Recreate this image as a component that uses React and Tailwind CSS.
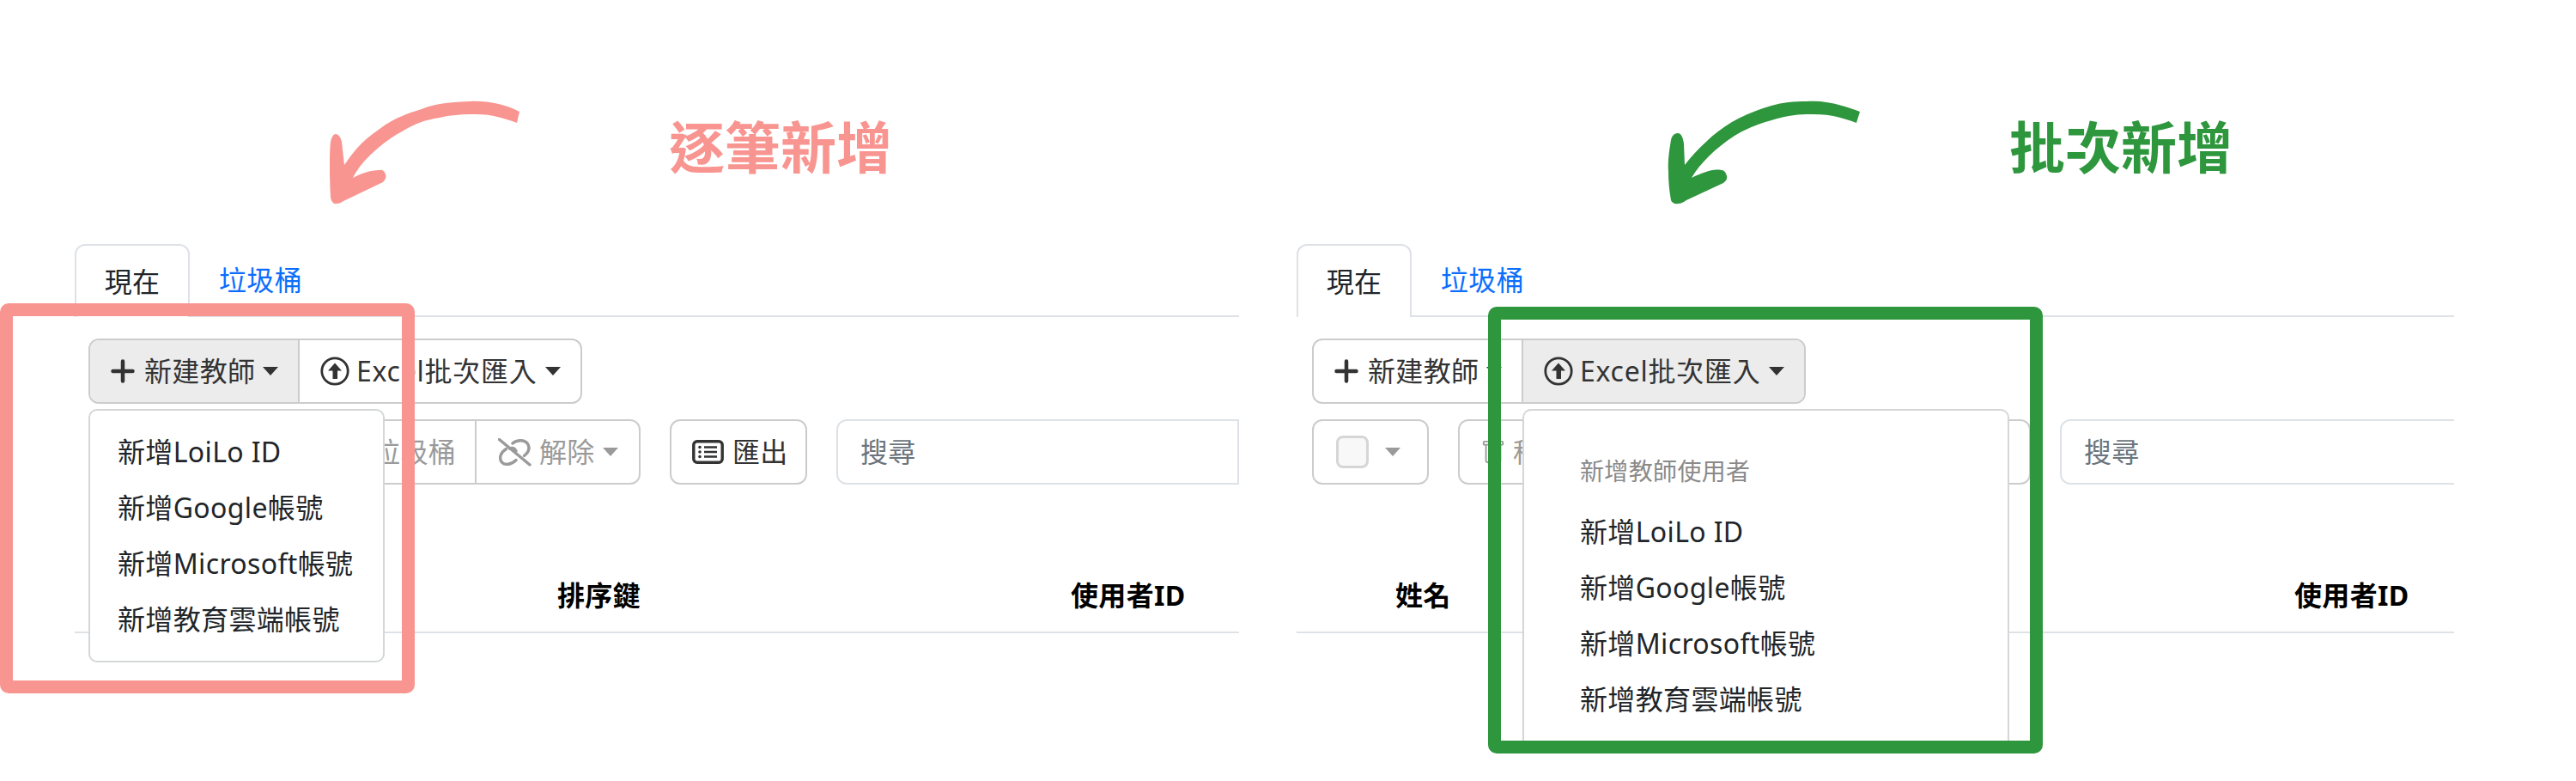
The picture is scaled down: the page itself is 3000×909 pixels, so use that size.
import { BsTrash } from 'react-icons/bs'

const ITEMS = ['新增LoiLo ID', '新增Google帳號', '新增Microsoft帳號', '新增教育雲端帳號']

function Caret({ muted }) {
  return (
    <span
      className={`inline-block w-0 h-0 border-x-[9px] border-x-transparent border-t-[10px] ${
        muted ? 'border-t-[#9a9a9a]' : 'border-t-[#333333]'
      }`}
    />
  )
}

function PlusIcon() {
  return (
    <svg width="28" height="28" viewBox="0 0 28 28" className="shrink-0">
      <path d="M14 2.5v23M2.5 14h23" stroke="#333333" strokeWidth="4.5" strokeLinecap="round" fill="none" />
    </svg>
  )
}

function UploadIcon() {
  return (
    <svg width="34" height="34" viewBox="0 0 34 34" className="shrink-0">
      <circle cx="17" cy="17" r="15.2" stroke="#333333" strokeWidth="2.8" fill="none" />
      <path d="M17 7.5 L25 16.5 H20 V26 H14.5 V16.5 H9 Z" fill="#333333" />
    </svg>
  )
}

function UnlinkIcon() {
  return (
    <svg width="39" height="33" viewBox="0 0 39 33" className="shrink-0">
      <g stroke="#9a9a9a" strokeWidth="3.4" strokeLinecap="round" fill="none">
        <path d="M1.5 1.5 L37 31" />
        <path d="M17 6 C22 1.5 31 1.5 34.5 6.5 C37.5 11.5 35.5 16.5 30.5 20.5" />
        <path d="M9.5 12.5 C3 16.5 1 23 4 27.5 C7.5 32 15.5 31 21 25.5" />
        <path d="M13.5 12 C16.5 11 19.5 12 21 15" />
      </g>
    </svg>
  )
}

function ListIcon() {
  return (
    <svg width="37" height="28" viewBox="0 0 37 28" className="shrink-0">
      <rect x="1.8" y="1.8" width="33.4" height="24.4" rx="4" stroke="#333333" strokeWidth="3.4" fill="none" />
      <path d="M14 8.5h15M14 14h15M14 19.5h15" stroke="#333333" strokeWidth="2.4" fill="none" />
      <circle cx="9" cy="8.5" r="1.8" fill="#333333" />
      <circle cx="9" cy="14" r="1.8" fill="#333333" />
      <circle cx="9" cy="19.5" r="1.8" fill="#333333" />
    </svg>
  )
}

const PINK_ARROW =
  'M221 13 C203 4 183 0 163 1 C142 2 123 3 107 10 C90 15 78 20 65 28 C54 36 45 42 37 50 C29 58 23 66 17 75 L14 48 C13 43 10 39 7 39 C4 39 2 43 1 48 C-0.5 60 -0.3 90 1 113 C2 118 5 121 8 120 C11 120 13 119 16 117 L62 95 C65 92 66 89 65 86 C64 82 61 80 58 81 C47 81 36 85 27 90 C33 78 42 68 51 60 C62 50 74 41 86 35 C99 27 113 22 128 20 C140 17 152 16 163 16 C173 16 182 16 191 18 C201 20 210 23 218 26 Z'

const GREEN_ARROW =
  'M224 13 C217 10 210 8 203 6 C190 2 176 0 162 1 C148 1 134 2 121 6 C104 11 89 17 75 25 C64 32 54 39 45 48 C35 57 27 66 20 75 L19 50 C18 43 16 38 12 38 C8 38 5 41 4 46 C2 58 0 71 1 83 C1 94 2 105 4 116 C5 119 9 121 12 120 C16 120 19 118 22 116 L65 96 C68 94 70 91 69 88 C68 84 66 81 63 81 C56 80 50 81 45 83 C39 85 33 87 28 90 C33 81 40 73 47 66 C57 56 67 48 78 41 C91 33 106 27 121 23 C134 19 148 16 162 16 C172 16 183 16 193 18 C203 20 212 23 220 26 Z'

function Dropdown({ heading }) {
  if (heading) {
    return (
      <div className="absolute left-0 top-[80px] w-[567px] h-[401px] bg-white border-x-2 border-t-2 border-[#d4d6d8] rounded-t-[10px] pt-[37px]">
        <div className="h-[65px] mb-[6px] px-[65px] flex items-center text-[#8a8a8a] text-[28px]">{heading}</div>
        {ITEMS.map((t) => (
          <div key={t} className="h-[65px] px-[65px] flex items-center text-[#212529]">{t}</div>
        ))}
      </div>
    )
  }
  return (
    <div className="absolute -left-[2px] top-[80px] w-[345px] bg-white border-2 border-[#d4d6d8] rounded-[10px] pt-[15px] pb-[16px]">
      {ITEMS.map((t) => (
        <div key={t} className="h-[65px] px-[32px] flex items-center text-[#212529]">{t}</div>
      ))}
    </div>
  )
}

function Panel({ active, title, titleColor, arrow, arrowFill, panelWidth, titleGap, arrowLeft, insetClass, headClass }) {
  return (
    <section className={panelWidth}>
      {/* annotation above the tabs */}
      <div className="h-[284px] flex items-start">
        <svg width="226" height="124" viewBox="0 0 226 124" className={`mt-[117px] shrink-0 ${arrowLeft}`}>
          <path d={arrow} fill={arrowFill} />
        </svg>
        <h2 className={`mt-[138px] text-[65px] leading-[66px] font-bold tracking-normal whitespace-nowrap ${titleColor} ${titleGap}`}>
          {title}
        </h2>
      </div>

      <div className="flex h-[85px] border-b-2 border-[#dee2e6]">
        <div className="w-[134px] h-[85px] bg-white border-2 border-b-0 border-[#dee2e6] rounded-t-[12px] flex items-center justify-center text-[#212529]">
          現在
        </div>
        <div className="px-[34px] flex items-center text-[#0d6efd]">垃圾桶</div>
      </div>

      <div className={insetClass}>
        <div className="relative mt-[25px] h-[76px] w-[575px] flex border-2 border-[#cccccc] rounded-[12px] text-[#333333]">
          <div className={`w-[244px] flex items-center pl-[24px] rounded-l-[10px] border-r-2 border-[#cccccc] ${active === 'single' ? 'bg-[#ececec]' : ''}`}>
            <PlusIcon />
            <span className="ml-[11px] mr-[9px]">新建教師</span>
            <Caret />
          </div>
          <div className={`flex-1 flex items-center pl-[24px] rounded-r-[10px] ${active === 'batch' ? 'bg-[#ececec]' : ''}`}>
            <UploadIcon />
            <span className="ml-[8px] mr-[9px] tracking-[0.75px]">Excel批次匯入</span>
            <Caret />
          </div>
          {active === 'single' ? (
            <Dropdown />
          ) : (
            <div className="absolute left-[243px] top-0">
              <Dropdown heading="新增教師使用者" />
            </div>
          )}
        </div>

        <div className="mt-[18px] h-[76px] flex gap-[34px] overflow-hidden">
          <div className="w-[136px] shrink-0 flex items-center pl-[26px] border-2 border-[#cccccc] rounded-[12px]">
            <span className="w-[38px] h-[38px] bg-[#f8f8f8] border-[3px] border-[#d6d6d6] rounded-[8px] mr-[19px]" />
            <Caret muted />
          </div>
          <div className="shrink-0 flex border-2 border-[#cccccc] rounded-[12px] text-[#9a9a9a]">
            <div className="w-[280px] flex items-center pl-[24px] border-r-2 border-[#cccccc]">
              <BsTrash size={30} color="#9a9a9a" className="shrink-0" />
              <span className="ml-[8px]">移動至垃圾桶</span>
            </div>
            <div className="w-[189px] flex items-center pl-[25px]">
              <UnlinkIcon />
              <span className="ml-[9px] mr-[9px]">解除</span>
              <Caret muted />
            </div>
          </div>
          <div className="w-[160px] shrink-0 flex items-center pl-[24px] border-2 border-[#cccccc] rounded-[12px] text-[#333333]">
            <ListIcon />
            <span className="ml-[10px]">匯出</span>
          </div>
          <div className="w-[469px] shrink-0 flex items-center pl-[26px] border-2 border-[#dee2e6] rounded-l-[12px] text-[#6c757d]">
            搜尋
          </div>
        </div>
      </div>

      <div className={`h-[173px] flex items-end pb-[20px] border-b-2 border-[#dee2e6] font-bold text-black leading-[44px] ${headClass}`}>
        <span className="w-[449px] shrink-0">姓名</span>
        <span className="w-[598px] shrink-0">排序鍵</span>
        <span>使用者ID</span>
      </div>
    </section>
  )
}

export default function App() {
  return (
    <div className="relative w-[3000px] h-[909px] overflow-hidden bg-white pl-[87px] font-['Noto_Sans','Noto_Sans_CJK_TC',sans-serif] text-[32px] leading-[44px] tracking-[0.35px]">
      <div className="flex gap-[67px]">
        <Panel
          active="single"
          title="逐筆新增"
          titleColor="text-[#f99590]"
          arrow={PINK_ARROW}
          arrowFill="#f99590"
          panelWidth="w-[1356px] shrink-0"
          arrowLeft="ml-[297px]"
          titleGap="ml-[169px]"
          insetClass="pl-[16px]"
          headClass="pl-[113px]"
        />
        <Panel
          active="batch"
          title="批次新增"
          titleColor="text-[#2e963d]"
          arrow={GREEN_ARROW}
          arrowFill="#2e963d"
          panelWidth="w-[1348px] shrink-0"
          arrowLeft="ml-[432px]"
          titleGap="ml-[172px]"
          insetClass="pl-[18px]"
          headClass="pl-[115px]"
        />
      </div>

      {/* highlight frames drawn over the screenshots */}
      <div className="absolute left-0 top-[353px] w-[483px] h-[454px] border-[15px] border-[#f99590] rounded-[10px]" />
      <div className="absolute left-[1733px] top-[357px] w-[646px] h-[520px] border-[15px] border-[#2e963d] rounded-[10px]" />
    </div>
  )
}
